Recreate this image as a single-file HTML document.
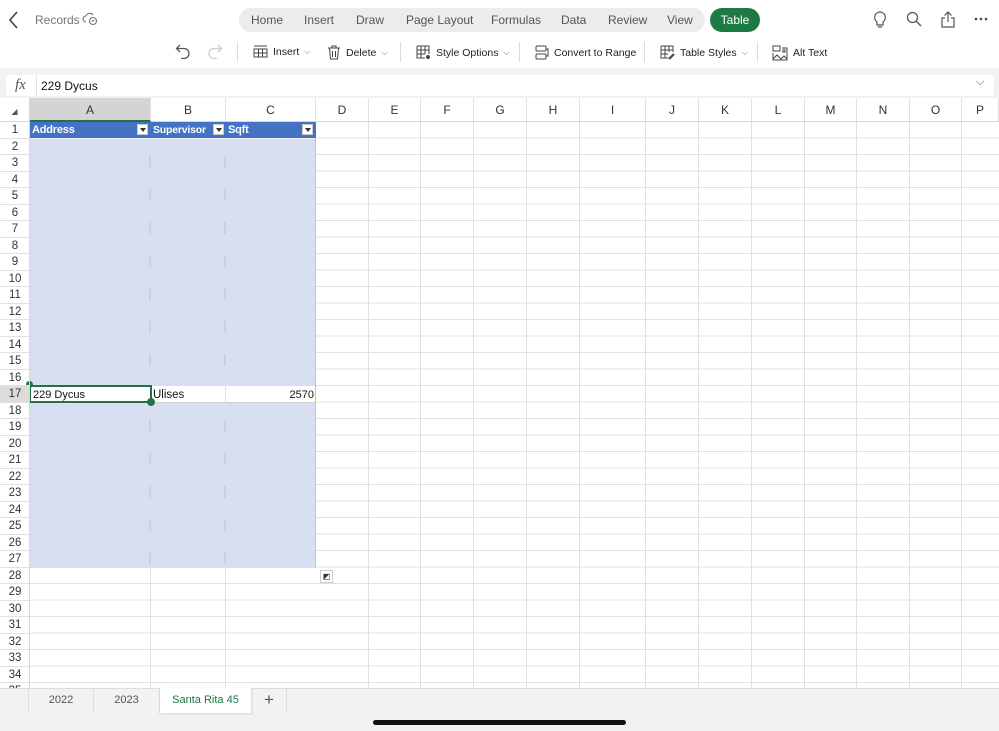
<!DOCTYPE html>
<html><head><meta charset="utf-8"><style>
*{margin:0;padding:0;box-sizing:border-box}
body{width:999px;height:731px;overflow:hidden;background:#fff;font-family:"Liberation Sans",sans-serif;position:relative;color:#222}
.a{position:absolute}
.tab{position:absolute;top:13px;font-size:12px;color:#555}
.tb{position:absolute;top:45px;font-size:10.5px;color:#222;display:flex;align-items:center;gap:5px}
.sep{position:absolute;top:42px;width:1px;height:20px;background:#ddd}
.ch{position:absolute;top:98px;height:24px;line-height:24px;text-align:center;font-size:12px;color:#333;border-right:1px solid #e1e1e1;border-bottom:1px solid #d6d6d6}
.rn div{height:16.5px;line-height:17px;font-size:11.5px;color:#333;text-align:center;border-bottom:1px solid #e1e1e1}
.vl{position:absolute;top:122px;width:1px;height:566px;background:#e1e1e1}
.dd{position:absolute;top:124px;width:11px;height:11px;background:#fff;border:1px solid #c8c8c8}
.dd:after{content:"";position:absolute;left:2px;top:3px;border-left:3px solid transparent;border-right:3px solid transparent;border-top:4px solid #333}
.wm{position:absolute;width:2px;height:12px;background:#f3f5fb;border:1px solid #c9d0e2;border-top:none;border-bottom:none}
.st{position:absolute;top:689px;height:24px;line-height:22px;font-size:11px;color:#555;text-align:center;border-right:1px solid #ddd}
.hd{position:absolute;top:124px;font-size:11px;font-weight:bold;color:#fff;letter-spacing:-0.2px}
</style></head><body>
<svg class="a" style="left:8px;top:11px" width="12" height="18" viewBox="0 0 12 18"><path d="M9 1L2 9l7 8" fill="none" stroke="#444" stroke-width="1.6"/></svg>
<div class="a" style="left:35px;top:13px;font-size:12px;color:#777">Records</div>
<svg class="a" style="left:82px;top:12px" width="16" height="14" viewBox="0 0 16 14"><path d="M4 10a3 3 0 0 1 0-6 4 4 0 0 1 7-1" fill="none" stroke="#777" stroke-width="1.1"/><circle cx="11" cy="9" r="3.5" fill="none" stroke="#777" stroke-width="1.1"/><path d="M9.5 9.5l3-1.5" stroke="#777"/></svg>
<div class="a" style="left:239px;top:8px;width:466px;height:24px;border-radius:12px;background:#ececec"></div>
<div class="tab" style="left:251px">Home</div>
<div class="tab" style="left:304px">Insert</div>
<div class="tab" style="left:356px">Draw</div>
<div class="tab" style="left:406px">Page Layout</div>
<div class="tab" style="left:491px">Formulas</div>
<div class="tab" style="left:561px">Data</div>
<div class="tab" style="left:608px">Review</div>
<div class="tab" style="left:667px">View</div>
<div class="a" style="left:710px;top:8px;width:50px;height:24px;border-radius:12px;background:#1e7a45;color:#fff;font-size:12px;text-align:center;line-height:24px">Table</div>
<svg class="a" style="left:873px;top:11px" width="14" height="18" viewBox="0 0 14 18"><path d="M7 1a5.5 5.5 0 0 0-3 10v3h6v-3A5.5 5.5 0 0 0 7 1zM5 16h4" fill="none" stroke="#555" stroke-width="1.2"/></svg>
<svg class="a" style="left:906px;top:11px" width="16" height="16" viewBox="0 0 16 16"><circle cx="6.5" cy="6.5" r="5" fill="none" stroke="#555" stroke-width="1.3"/><path d="M10 10l5 5" stroke="#555" stroke-width="1.3"/></svg>
<svg class="a" style="left:940px;top:10px" width="16" height="18" viewBox="0 0 16 18"><path d="M8 12V2M4.5 5.5L8 2l3.5 3.5M5 8H2v9h12V8h-3" fill="none" stroke="#555" stroke-width="1.2"/></svg>
<svg class="a" style="left:974px;top:17px" width="14" height="4" viewBox="0 0 14 4"><circle cx="2" cy="2" r="1.3" fill="#444"/><circle cx="7" cy="2" r="1.3" fill="#444"/><circle cx="12" cy="2" r="1.3" fill="#444"/></svg>
<svg class="a" style="left:175px;top:43px" width="16" height="16" viewBox="0 0 16 16"><path d="M5 2L1.5 5.5 5 9M2 5.5h7a5 5 0 0 1 0 10H6" fill="none" stroke="#555" stroke-width="1.3"/></svg>
<svg class="a" style="left:207px;top:43px" width="16" height="16" viewBox="0 0 16 16"><path d="M11 2l3.5 3.5L11 9M14 5.5H7a5 5 0 0 0 0 10h3" fill="none" stroke="#ccc" stroke-width="1.3"/></svg>
<div class="sep" style="left:237px"></div>
<div class="tb" style="left:253px"><svg width="15" height="13" viewBox="0 0 15 13"><path d="M1 1h13M1 4h13v8H1zM1 8h13M5.5 4v8M9.5 4v8" fill="none" stroke="#444" stroke-width="1"/></svg>Insert <span style="font-size:8px;color:#666">⌵</span></div>
<div class="tb" style="left:327px"><svg width="14" height="15" viewBox="0 0 14 15"><path d="M1 3h12M5 3V1h4v2M2.5 3l1 11h7l1-11M5.5 6v6M8.5 6v6" fill="none" stroke="#444" stroke-width="1"/></svg>Delete <span style="font-size:8px;color:#666">⌵</span></div>
<div class="sep" style="left:400px"></div>
<div class="tb" style="left:416px"><svg width="15" height="15" viewBox="0 0 15 15"><path d="M1 1h12v8M1 1v12h8M1 5h12M1 9h8M5 1v12M9 1v8" fill="none" stroke="#444" stroke-width="1"/><circle cx="12" cy="12" r="2" fill="#444"/></svg>Style Options <span style="font-size:8px;color:#666">⌵</span></div>
<div class="sep" style="left:519px"></div>
<div class="tb" style="left:535px"><svg width="14" height="15" viewBox="0 0 14 15"><rect x="1" y="1" width="10" height="5" rx="1" fill="none" stroke="#444"/><rect x="1" y="9" width="10" height="5" rx="1" fill="none" stroke="#444"/><path d="M11 4h2v7h-2" fill="none" stroke="#444"/></svg>Convert to Range</div>
<div class="sep" style="left:644px"></div>
<div class="tb" style="left:660px"><svg width="15" height="15" viewBox="0 0 15 15"><path d="M1 1h12v6M1 1v12h7M1 5h12M1 9h7M5 1v12M9 1v6" fill="none" stroke="#444" stroke-width="1"/><path d="M9 14l5-5" stroke="#444" stroke-width="2.2"/></svg>Table Styles <span style="font-size:8px;color:#666">⌵</span></div>
<div class="sep" style="left:757px"></div>
<div class="tb" style="left:772px"><svg width="16" height="16" viewBox="0 0 16 16"><rect x="1" y="1" width="7" height="5" fill="none" stroke="#444"/><path d="M1 8v7h14V3h-5M1 14l4-4 4 4 3-3 3 3" fill="none" stroke="#444"/><circle cx="12" cy="6" r="1.3" fill="none" stroke="#444"/></svg>Alt Text</div>
<div class="a" style="left:0;top:68px;width:999px;height:30px;background:#f2f2f2"></div>
<div class="a" style="left:6px;top:75px;width:988px;height:21px;background:#fff;border-radius:3px"></div>
<div class="a" style="left:15px;top:77px;font-family:'Liberation Serif',serif;font-style:italic;font-size:15px;color:#555">fx</div>
<div class="a" style="left:36px;top:75px;width:1px;height:21px;background:#e4e4e4"></div>
<div class="a" style="left:41px;top:79px;font-size:12px;color:#111">229 Dycus</div>
<div class="a" style="left:976px;top:76px;font-size:11px;color:#555">⌵</div>
<div class="ch" style="left:0;width:30px;background:#fff"><span style="font-size:8px;color:#555">◢</span></div>
<div class="ch" style="left:30px;width:121px;background:#d4d4d4;border-bottom:2px solid #217346">A</div>
<div class="ch" style="left:151px;width:75px">B</div>
<div class="ch" style="left:226px;width:90px">C</div>
<div class="ch" style="left:316px;width:53px">D</div>
<div class="ch" style="left:369px;width:52px">E</div>
<div class="ch" style="left:421px;width:53px">F</div>
<div class="ch" style="left:474px;width:53px">G</div>
<div class="ch" style="left:527px;width:53px">H</div>
<div class="ch" style="left:580px;width:66px">I</div>
<div class="ch" style="left:646px;width:53px">J</div>
<div class="ch" style="left:699px;width:53px">K</div>
<div class="ch" style="left:752px;width:53px">L</div>
<div class="ch" style="left:805px;width:52px">M</div>
<div class="ch" style="left:857px;width:53px">N</div>
<div class="ch" style="left:910px;width:52px">O</div>
<div class="ch" style="left:962px;width:37px">P</div>
<div class="a" style="left:30px;top:122px;width:969px;height:566px;background:repeating-linear-gradient(to bottom,transparent 0,transparent 15.5px,#e1e1e1 15.5px,#e1e1e1 16.5px)"></div>
<div class="a" style="left:30px;top:138.5px;width:286px;height:429px;background:#d8dff2"></div>
<div class="a" style="left:30px;top:386px;width:286px;height:16.5px;background:#fff;border-bottom:1px solid #d0d0d0"></div>
<div class="vl" style="left:150px"></div><div class="vl" style="left:225px"></div><div class="vl" style="left:315px;background:#b8c4e4;height:446px"></div>
<div class="vl" style="left:368px"></div><div class="vl" style="left:420px"></div><div class="vl" style="left:473px"></div><div class="vl" style="left:526px"></div><div class="vl" style="left:579px"></div><div class="vl" style="left:645px"></div><div class="vl" style="left:698px"></div><div class="vl" style="left:751px"></div><div class="vl" style="left:804px"></div><div class="vl" style="left:856px"></div><div class="vl" style="left:909px"></div><div class="vl" style="left:961px"></div>
<div class="a" style="left:150px;top:138px;width:1px;height:248px;background:#d8dff2"></div><div class="a" style="left:225px;top:138px;width:1px;height:248px;background:#d8dff2"></div>
<div class="a" style="left:150px;top:403px;width:1px;height:165px;background:#d8dff2"></div><div class="a" style="left:225px;top:403px;width:1px;height:165px;background:#d8dff2"></div>
<div class="wm" style="left:149px;top:156px"></div><div class="wm" style="left:224px;top:156px"></div>
<div class="wm" style="left:149px;top:189px"></div><div class="wm" style="left:224px;top:189px"></div>
<div class="wm" style="left:149px;top:222px"></div><div class="wm" style="left:224px;top:222px"></div>
<div class="wm" style="left:149px;top:255px"></div><div class="wm" style="left:224px;top:255px"></div>
<div class="wm" style="left:149px;top:288px"></div><div class="wm" style="left:224px;top:288px"></div>
<div class="wm" style="left:149px;top:321px"></div><div class="wm" style="left:224px;top:321px"></div>
<div class="wm" style="left:149px;top:354px"></div><div class="wm" style="left:224px;top:354px"></div>
<div class="wm" style="left:149px;top:420px"></div><div class="wm" style="left:224px;top:420px"></div>
<div class="wm" style="left:149px;top:453px"></div><div class="wm" style="left:224px;top:453px"></div>
<div class="wm" style="left:149px;top:486px"></div><div class="wm" style="left:224px;top:486px"></div>
<div class="wm" style="left:149px;top:519px"></div><div class="wm" style="left:224px;top:519px"></div>
<div class="wm" style="left:149px;top:552px"></div><div class="wm" style="left:224px;top:552px"></div>
<div class="a" style="left:30px;top:122px;width:286px;height:16px;background:#4472c4"></div>
<div class="hd" style="left:32px">Address</div>
<div class="hd" style="left:153px;font-size:10.5px">Supervisor</div>
<div class="hd" style="left:228px">Sqft</div>
<div class="dd" style="left:137px"></div><div class="dd" style="left:213px"></div><div class="dd" style="left:302px"></div>
<div class="a" style="left:33px;top:389px;font-size:11px;color:#111">229 Dycus</div>
<div class="a" style="left:153px;top:389px;font-size:11.5px;color:#111">Ulises</div>
<div class="a" style="left:280px;top:389px;width:34px;text-align:right;font-size:11px;color:#111">2570</div>
<div class="a" style="left:29px;top:385px;width:123px;height:18px;border:2px solid #217346"></div>
<div class="a" style="left:26px;top:381px;width:7px;height:7px;border-radius:50%;background:#217346"></div>
<div class="a" style="left:147px;top:398px;width:8px;height:8px;border-radius:50%;background:#217346"></div>
<div class="a" style="left:320px;top:570px;width:13px;height:13px;border:1px solid #ccc;background:#fff;font-size:8px;line-height:11px;text-align:center;color:#333">◩</div>
<div class="a rn" style="left:0;top:122px;width:30px">
<div>1</div><div>2</div><div>3</div><div>4</div><div>5</div><div>6</div><div>7</div><div>8</div><div>9</div><div>10</div><div>11</div><div>12</div><div>13</div><div>14</div><div>15</div><div>16</div><div style="background:#dcdcdc">17</div><div>18</div><div>19</div><div>20</div><div>21</div><div>22</div><div>23</div><div>24</div><div>25</div><div>26</div><div>27</div><div>28</div><div>29</div><div>30</div><div>31</div><div>32</div><div>33</div><div>34</div><div>35</div>
</div>
<div class="a" style="left:29px;top:98px;width:1px;height:590px;background:#d6d6d6"></div>
<div class="a" style="left:0;top:688px;width:999px;height:43px;background:#f2f2f2;border-top:1px solid #ddd"></div>
<div class="st" style="left:28px;width:66px;border-left:1px solid #ddd">2022</div>
<div class="st" style="left:94px;width:66px">2023</div>
<div class="st" style="left:160px;width:92px;background:#fff;color:#217346;height:25px;top:688px;line-height:24px;box-shadow:0 1px 2px rgba(0,0,0,.1)">Santa Rita 45</div>
<div class="st" style="left:252px;width:35px;font-size:17px;color:#555">+</div>
<div class="a" style="left:373px;top:720px;width:253px;height:5px;border-radius:3px;background:#111"></div>
</body></html>
